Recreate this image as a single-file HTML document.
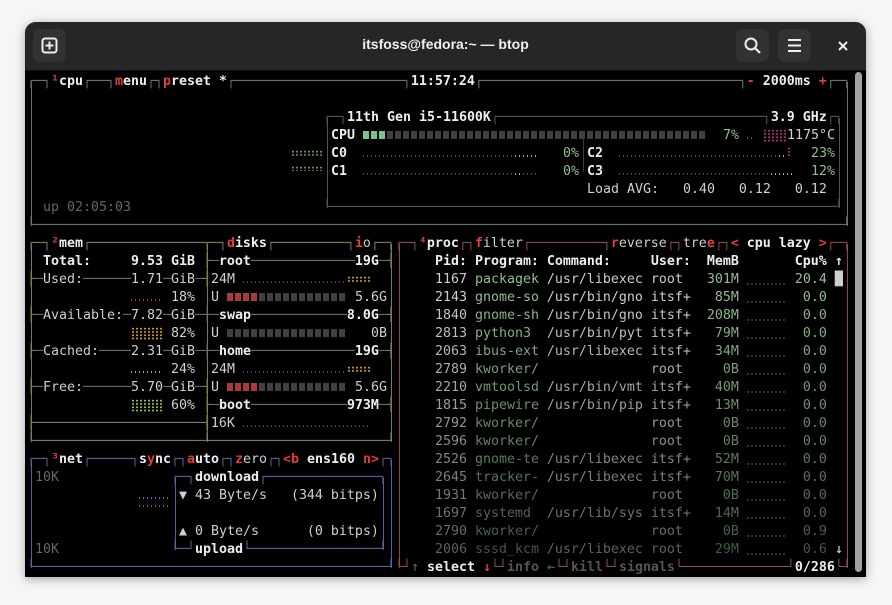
<!DOCTYPE html>
<html><head><meta charset="utf-8">
<style>
html,body{margin:0;padding:0;}
body{width:892px;height:605px;background:#f6f6f6;position:relative;overflow:hidden;}
.win{position:absolute;left:25px;top:22px;width:841px;height:555px;background:#000;border-radius:11px 11px 0 0;overflow:hidden;box-shadow:0 2px 10px rgba(0,0,0,.35);}
.tb{position:absolute;left:0;top:0;width:841px;height:48px;background:#262626;border-bottom:1px solid #111;}
.title{position:absolute;left:0;width:841px;top:14px;text-align:center;font:bold 14px "Liberation Sans",sans-serif;color:#f0f0f0;}
.btn{position:absolute;top:7px;width:33px;height:33px;background:#323232;border-radius:7px;}
.sb{position:absolute;left:830px;top:50px;width:7px;height:500px;background:#a2a2a2;border-radius:4px;}
.t{position:absolute;left:27px;top:73px;width:824px;height:504px;font-family:"DejaVu Sans Mono","Liberation Mono",monospace;font-size:13.29px;color:#cfcfcf;}
.t p{position:absolute;margin:0;white-space:pre;line-height:18px;height:18px;}
.v{position:absolute;width:1px;}
.g{color:#5f7a5f}.gi{color:#4c564c}.y{color:#7f7a52}.p{color:#8c4a4a}.n{color:#5c5ca0}
.r{color:#e23c3c;font-weight:bold}.w{color:#eeeeee;font-weight:bold}.d{color:#666}.l{color:#6a6a6a}
.m{color:#8fbf8f}.dd{color:#555;font-weight:bold}
.x{color:#cfcfcf}
.bar{display:inline-block;height:8px;vertical-align:0;background:repeating-linear-gradient(90deg,var(--c) 0 6px,transparent 6px 8px);}
.dl{display:inline-block;height:2px;vertical-align:0;background:repeating-linear-gradient(90deg,var(--c) 0 1px,transparent 1px 4px);}
.gd{display:inline-block;height:13px;vertical-align:-3px;background-image:radial-gradient(circle,var(--c) 0.8px,transparent 1.2px);background-size:4px 3.3px;}
</style></head><body>
<div class="win">
 <div class="tb">
  <div class="btn" style="left:8px"><svg width="33" height="33" viewBox="0 0 33 33"><rect x="9.5" y="9.5" width="14" height="14" rx="2.5" fill="none" stroke="#eee" stroke-width="2"/><path d="M16.5 12.5v8M12.5 16.5h8" stroke="#eee" stroke-width="2"/></svg></div>
  <div class="title">itsfoss@fedora:~ — btop</div>
  <div class="btn" style="left:711px"><svg width="33" height="33" viewBox="0 0 33 33"><circle cx="15" cy="15" r="5.5" fill="none" stroke="#eee" stroke-width="2"/><path d="M19 19l5 5" stroke="#eee" stroke-width="2.2"/></svg></div>
  <div class="btn" style="left:753px"><svg width="33" height="33" viewBox="0 0 33 33"><path d="M10 11h13M10 16.5h13M10 22h13" stroke="#eee" stroke-width="2"/></svg></div>
  <svg style="position:absolute;left:811px;top:17px" width="14" height="14" viewBox="0 0 14 14"><path d="M3 3l8 8M11 3l-8 8" stroke="#eee" stroke-width="2"/></svg>
 </div>
 <div class="sb"></div>
</div>

<div class="t">
<div class="v" style="left:4px;top:9px;height:144px;background:#5f7a5f"></div>
<div class="v" style="left:820px;top:9px;height:144px;background:#5f7a5f"></div>
<div class="v" style="left:300px;top:45px;height:90px;background:#4c564c"></div>
<div class="v" style="left:812px;top:45px;height:90px;background:#4c564c"></div>
<div class="v" style="left:556px;top:63px;height:36px;background:#3c3c3c"></div>
<div class="v" style="left:4px;top:171px;height:198px;background:#7f7a52"></div>
<div class="v" style="left:180px;top:171px;height:198px;background:#7f7a52"></div>
<div class="v" style="left:364px;top:171px;height:198px;background:#7f7a52"></div>
<div class="v" style="left:372px;top:171px;height:324px;background:#8c4a4a"></div>
<div class="v" style="left:820px;top:171px;height:324px;background:#8c4a4a"></div>
<div class="v" style="left:4px;top:387px;height:108px;background:#5c5ca0"></div>
<div class="v" style="left:364px;top:387px;height:108px;background:#5c5ca0"></div>
<div class="v" style="left:148px;top:405px;height:72px;background:#5c5ca0"></div>
<div class="v" style="left:356px;top:405px;height:72px;background:#5c5ca0"></div>
<div style="position:absolute;left:720px;top:198px;width:40px;height:288px;background-image:radial-gradient(circle at 1px 13px,#3a3a3a 0.8px,transparent 1.2px);background-size:4px 18px;"></div>

<p style="top:0;left:0"><span class="g">┌─┐</span><span class="r">¹</span><span class="w">cpu</span><span class="g">┌──┐</span><span class="r">m</span><span class="w">enu</span><span class="g">┌┐</span><span class="r">p</span><span class="w">reset *</span><span class="g">┌─────────────────────┐</span><span class="w">11:57:24</span><span class="g">┌────────────────────────────────┐</span><span class="r">-</span><span class="w"> 2000ms </span><span class="r">+</span><span class="g">┌─┐</span></p>
<p style="top:36px;left:296px"><span class="gi">┌─┐</span><span class="w">11th Gen i5-11600K</span><span class="gi">┌─────────────────────────────────┐</span><span class="w">3.9 GHz</span><span class="gi">┌┐</span></p>

<p style="top:54px;left:304px"><span class="w">CPU</span></p>
<p style="top:54px;left:336px"><span class="bar" style="--c:#79c58e;width:24px"></span><span class="bar" style="--c:#404040;width:320px"></span></p>
<p style="top:54px;left:696px" class="m">7%</p>
<p style="top:54px;left:720px"><span class="dl" style="--c:#555;width:8px"></span></p>
<p style="top:54px;left:736px"><span class="gd" style="--c:#c0307f;width:24px"></span></p>
<p style="top:54px;left:760px">1175°C</p>

<p style="top:72px;left:264px"><span class="gd" style="--c:#6a9a5a;width:32px;height:7px;vertical-align:0"></span></p>
<p style="top:72px;left:304px" class="w">C0</p>
<p style="top:72px;left:336px"><span class="dl" style="--c:#444;width:152px"></span><span class="dl" style="--c:#8fbf8f;width:24px"></span></p>
<p style="top:72px;left:536px" class="m">0%</p>
<p style="top:72px;left:560px" class="w">C2</p>
<p style="top:72px;left:592px"><span class="dl" style="--c:#444;width:160px"></span><span class="dl" style="--c:#8fbf8f;width:8px"></span><span class="gd" style="--c:#d03030;width:4px;height:10px;vertical-align:0"></span></p>
<p style="top:72px;left:784px" class="m">23%</p>

<p style="top:90px;left:264px"><span class="gd" style="--c:#6a9a5a;width:32px;height:5px;vertical-align:4px"></span></p>
<p style="top:90px;left:304px" class="w">C1</p>
<p style="top:90px;left:336px"><span class="dl" style="--c:#444;width:152px"></span><span class="dl" style="--c:#8fbf8f;width:8px"></span><span class="dl" style="--c:#444;width:16px"></span></p>
<p style="top:90px;left:536px" class="m">0%</p>
<p style="top:90px;left:560px" class="w">C3</p>
<p style="top:90px;left:592px"><span class="dl" style="--c:#444;width:152px"></span><span class="dl" style="--c:#8fbf8f;width:24px"></span></p>
<p style="top:90px;left:784px" class="m">12%</p>

<p style="top:108px;left:560px">Load AVG:   0.40   0.12   0.12</p>
<p style="top:126px;left:16px" class="d">up 02:05:03</p>
<p style="top:126px;left:296px" class="gi">└───────────────────────────────────────────────────────────────┘</p>
<p style="top:144px;left:0" class="g">└─────────────────────────────────────────────────────────────────────────────────────────────────────┘</p>

<p style="top:162px;left:0"><span class="y">┌─┐</span><span class="r">²</span><span class="w">mem</span><span class="y">┌──────────────┬─┐</span><span class="r">d</span><span class="w">isks</span><span class="y">┌─────────┐</span><span class="r">i</span><span class="x">o</span><span class="y">┌─┐</span><span class="p">┌─┐</span><span class="r">⁴</span><span class="w">proc</span><span class="p">┌┐</span><span class="r">f</span><span class="x">ilter</span><span class="p">┌─────────┐</span><span class="r">r</span><span class="x">everse</span><span class="p">┌┐</span><span class="x">tre</span><span class="r">e</span><span class="p">┌┐</span><span class="r">&lt;</span><span class="w"> cpu lazy </span><span class="r">&gt;</span><span class="p">┌─┐</span></p>

<p style="top:180px;left:0">  <span class="w">Total:</span>     <span class="w">9.53 GiB</span> <span class="y">├</span><span class="l">─</span><span class="w">root</span><span class="l">─────────────</span><span class="w">19G</span><span class="l">─</span><span class="y">┤</span></p>
<p style="top:198px;left:0"><span class="y">├</span><span class="l">─</span>Used:<span class="l">──────</span>1.71<span class="l">─</span>GiB<span class="l">─</span><span class="y">┤</span>24M</p>
<p style="top:198px;left:216px"><span class="dl" style="--c:#444;width:104px"></span><span class="gd" style="--c:#d8a020;width:24px;height:7px;vertical-align:0"></span></p>
<p style="top:216px;left:104px"><span class="dl" style="--c:#b03a3a;width:32px"></span></p>
<p style="top:216px;left:144px">18%</p>
<p style="top:216px;left:184px">U</p>
<p style="top:216px;left:200px"><span class="bar" style="--c:#a83a3a;width:32px"></span><span class="bar" style="--c:#404040;width:88px"></span></p>
<p style="top:216px;left:328px">5.6G</p>
<p style="top:234px;left:0"><span class="y">├</span><span class="l">─</span>Available:<span class="l">─</span>7.82<span class="l">─</span>GiB<span class="l">─┼─</span><span class="w">swap</span><span class="l">────────────</span><span class="w">8.0G</span><span class="l">─</span><span class="y">┤</span></p>
<p style="top:252px;left:104px"><span class="gd" style="--c:#d8a020;width:32px"></span></p>
<p style="top:252px;left:144px">82%</p>
<p style="top:252px;left:184px">U</p>
<p style="top:252px;left:200px"><span class="bar" style="--c:#404040;width:120px"></span></p>
<p style="top:252px;left:344px">0B</p>
<p style="top:270px;left:0"><span class="y">├</span><span class="l">─</span>Cached:<span class="l">────</span>2.31<span class="l">─</span>GiB<span class="l">─┼─</span><span class="w">home</span><span class="l">─────────────</span><span class="w">19G</span><span class="l">─</span><span class="y">┤</span></p>
<p style="top:288px;left:104px"><span class="dl" style="--c:#79c58e;width:32px"></span></p>
<p style="top:288px;left:144px">24%</p>
<p style="top:288px;left:184px">24M</p>
<p style="top:288px;left:216px"><span class="dl" style="--c:#444;width:104px"></span><span class="gd" style="--c:#d8a020;width:24px;height:7px;vertical-align:0"></span></p>
<p style="top:306px;left:0"><span class="y">├</span><span class="l">─</span>Free:<span class="l">──────</span>5.70<span class="l">─</span>GiB<span class="l">─</span><span class="y">┤</span>U</p>
<p style="top:306px;left:200px"><span class="bar" style="--c:#a83a3a;width:32px"></span><span class="bar" style="--c:#404040;width:88px"></span></p>
<p style="top:306px;left:328px">5.6G</p>
<p style="top:324px;left:104px"><span class="gd" style="--c:#a8c84a;width:32px"></span></p>
<p style="top:324px;left:144px">60%</p>
<p style="top:324px;left:176px"><span class="y">├</span><span class="l">─</span><span class="w">boot</span><span class="l">────────────</span><span class="w">973M</span><span class="l">─</span><span class="y">┤</span></p>
<p style="top:342px;left:0"><span class="y">├─────────────────────┤</span>16K</p>
<p style="top:342px;left:216px"><span class="dl" style="--c:#444;width:128px"></span></p>
<p style="top:360px;left:0" class="y">└─────────────────────┴──────────────────────┘</p>

<p style="top:378px;left:0"><span class="n">┌─┐</span><span class="r">³</span><span class="w">net</span><span class="n">┌─────┐</span><span class="w">s</span><span class="r">y</span><span class="w">nc</span><span class="n">┌┐</span><span class="r">a</span><span class="w">uto</span><span class="n">┌┐</span><span class="r">z</span><span class="x">ero</span><span class="n">┌┐</span><span class="r">&lt;b</span><span class="w"> ens160 </span><span class="r">n&gt;</span><span class="n">┌┐</span></p>
<p style="top:396px;left:8px" class="d">10K</p>
<p style="top:396px;left:144px"><span class="n">┌─┐</span><span class="w">download</span><span class="n">┌──────────────┐</span></p>
<p style="top:414px;left:112px"><span class="dl" style="--c:#5a5ab8;width:32px"></span></p>
<p style="top:414px;left:152px">▼ 43 Byte/s   (344 bitps)</p>
<p style="top:432px;left:112px"><span class="dl" style="--c:#b02c78;width:32px;vertical-align:12px"></span></p>
<p style="top:450px;left:152px">▲ 0 Byte/s      (0 bitps)</p>
<p style="top:468px;left:8px" class="d">10K</p>
<p style="top:468px;left:144px"><span class="n">└─┘</span><span class="w">upload</span><span class="n">└────────────────┘</span></p>
<p style="top:486px;left:0" class="n">└────────────────────────────────────────────┘</p>

<p style="top:180px;left:376px" class="w">    Pid: Program: Command:     User:  MemB       Cpu% ↑</p>
<p style="top:198px;left:376px">    1167 <span class="m">packagek</span> /usr/libexec root  <span class="m"> 301M</span>       <span class="m">20.4</span> █</p>
<p style="top:216px;left:376px">    2143 <span class="m">gnome-so</span> /usr/bin/gno itsf+ <span class="m">  85M</span>       <span class="m"> 0.0</span></p>
<p style="top:234px;left:376px;opacity:.95">    1840 <span class="m">gnome-sh</span> /usr/bin/gno itsf+ <span class="m"> 208M</span>       <span class="m"> 0.0</span></p>
<p style="top:252px;left:376px;opacity:.92">    2813 <span class="m">python3 </span> /usr/bin/pyt itsf+ <span class="m">  79M</span>       <span class="m"> 0.0</span></p>
<p style="top:270px;left:376px;opacity:.88">    2063 <span class="m">ibus-ext</span> /usr/libexec itsf+ <span class="m">  34M</span>       <span class="m"> 0.0</span></p>
<p style="top:288px;left:376px;opacity:.84">    2789 <span class="m">kworker/</span>              root  <span class="m">   0B</span>       <span class="m"> 0.0</span></p>
<p style="top:306px;left:376px;opacity:.8">    2210 <span class="m">vmtoolsd</span> /usr/bin/vmt itsf+ <span class="m">  40M</span>       <span class="m"> 0.0</span></p>
<p style="top:324px;left:376px;opacity:.76">    1815 <span class="m">pipewire</span> /usr/bin/pip itsf+ <span class="m">  13M</span>       <span class="m"> 0.0</span></p>
<p style="top:342px;left:376px;opacity:.72">    2792 <span class="m">kworker/</span>              root  <span class="m">   0B</span>       <span class="m"> 0.0</span></p>
<p style="top:360px;left:376px;opacity:.68">    2596 <span class="m">kworker/</span>              root  <span class="m">   0B</span>       <span class="m"> 0.0</span></p>
<p style="top:378px;left:376px;opacity:.64">    2526 <span class="m">gnome-te</span> /usr/libexec itsf+ <span class="m">  52M</span>       <span class="m"> 0.0</span></p>
<p style="top:396px;left:376px;opacity:.6">    2645 <span class="m">tracker-</span> /usr/libexec itsf+ <span class="m">  70M</span>       <span class="m"> 0.0</span></p>
<p style="top:414px;left:376px;opacity:.57">    1931 <span class="m">kworker/</span>              root  <span class="m">   0B</span>       <span class="m"> 0.0</span></p>
<p style="top:432px;left:376px;opacity:.54">    1697 <span class="m">systemd </span> /usr/lib/sys itsf+ <span class="m">  14M</span>       <span class="m"> 0.0</span></p>
<p style="top:450px;left:376px;opacity:.5">    2790 <span class="m">kworker/</span>              root  <span class="m">   0B</span>       <span class="m"> 0.9</span></p>
<p style="top:468px;left:376px;opacity:.46">    2006 <span class="m">sssd_kcm</span> /usr/libexec root  <span class="m">  29M</span>       <span class="m"> 0.6</span></p>
<p style="top:468px;left:808px;color:#eee">↓</p>
<p style="top:486px;left:368px"><span class="p">└┘</span><span class="d">↑ </span><span class="w">select</span> <span class="r">↓</span><span class="p">└┘</span><span class="dd">info ←</span><span class="p">└┘</span><span class="dd">kill</span><span class="p">└┘</span><span class="dd">signals</span><span class="p">└─────────────┘</span><span class="w">0/286</span><span class="p">└┘</span></p>
</div>
</body></html>
